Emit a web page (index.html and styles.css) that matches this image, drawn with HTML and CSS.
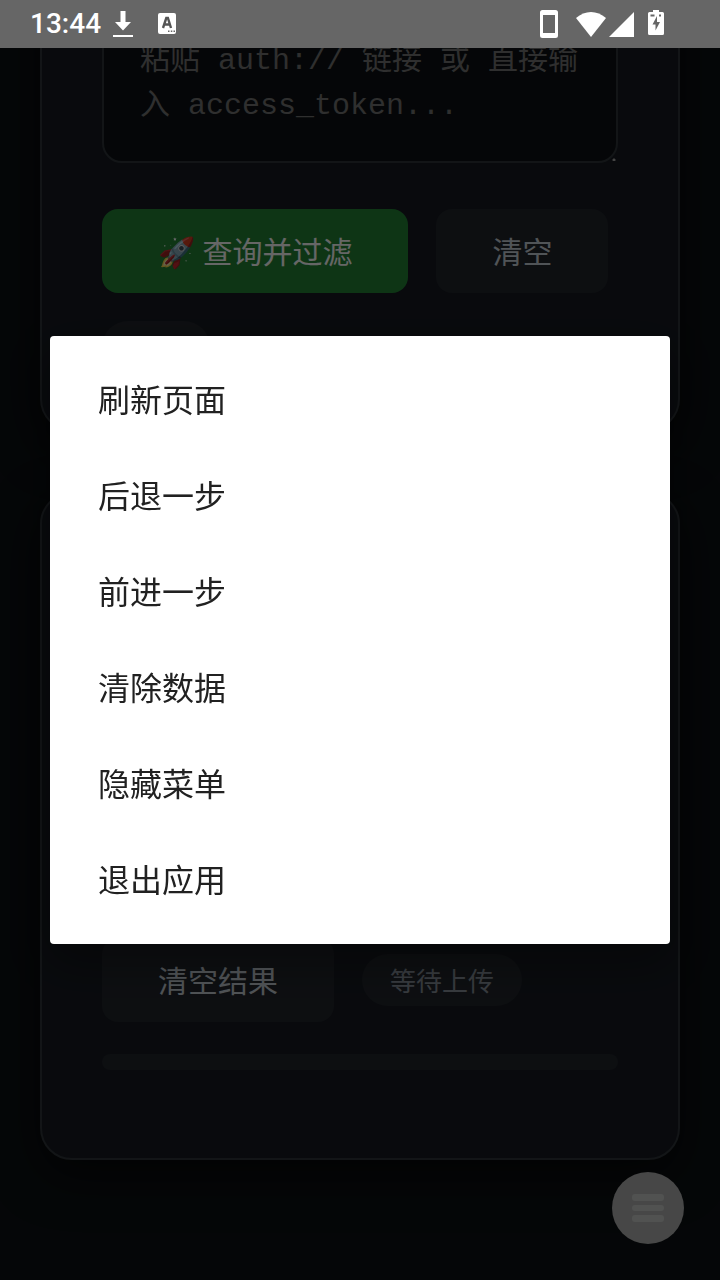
FILE: index.html
```
<!DOCTYPE html>
<html lang="zh-CN">
<head>
  <meta charset="UTF-8"/>
  <meta name="viewport" content="width=device-width, initial-scale=1"/>
  <title>查询并过滤</title>
  <link rel="stylesheet" href="styles.css">
</head>
<body>
  <header class="status-bar">
    <time class="clock">13:44</time>
    <svg class="icon-download" width="20" height="26" viewBox="0 0 20 26" fill="#fff">
      <path d="M7.500 0h5v11h5.500L10 19.500 2 11h5.500zM0 24h20v2H0z"/>
    </svg>
    <svg class="icon-keyboard" width="18" height="22" viewBox="0 0 18 22">
      <rect width="18" height="21" rx="2" fill="#fff"/>
      <path d="M5 15l3.300-10h1.600L13 15M6.300 11.500h5.500" fill="none" stroke="#555" stroke-width="2.400"/>
      <path d="M10 17.500h1.500v1.500h-1.500zM12.800 17.500h1.500v1.500h-1.500zM15.500 17.500h1.500v1.500h-1.500z" fill="#666"/>
    </svg>
    <div class="status-right">
      <svg class="icon-phone" width="18" height="28" viewBox="0 0 18 28">
        <path fill="#fff" fill-rule="evenodd" d="M2.500 0h13A2.500 2.500 0 0 1 18 2.500v23a2.500 2.500 0 0 1-2.500 2.500h-13A2.500 2.500 0 0 1 0 25.500v-23A2.500 2.500 0 0 1 2.500 0zM3 5v18h12V5z"/>
      </svg>
      <svg class="icon-wifi" width="30" height="25" viewBox="0 0 30 25" fill="#fff">
        <path d="M0 6C9-2 21-2 30 6L15 25z"/>
      </svg>
      <svg class="icon-signal" width="25" height="25" viewBox="0 0 25 25" fill="#fff">
        <path d="M25 0v25H0z"/>
      </svg>
      <svg class="icon-battery" width="16" height="25" viewBox="0 0 16 25">
        <path fill="#fff" d="M5 0h6v2h3.500A1.500 1.500 0 0 1 16 3.500v20a1.500 1.500 0 0 1-1.500 1.500h-13A1.500 1.500 0 0 1 0 23.500v-20A1.500 1.500 0 0 1 1.500 2H5z"/>
        <path fill="#666" d="M2.500 4.500h4v2h-4zM11 4.500h2v2h-2zM9 6v6h3L7.500 20.500v-6H4.500z"/>
      </svg>
    </div>
  </header>

  <main class="page">
    <section class="card">
      <textarea class="token-input" rows="2" aria-label="access_token" placeholder="粘贴 auth:// 链接 或 直接输入 access_token..."></textarea>
      <div class="actions">
        <button class="btn btn-primary">🚀 查询并过滤</button>
        <button class="btn">清空</button>
        <span class="chip"></span>
      </div>
    </section>

    <section class="card">
      <div class="results"></div>
      <div class="actions">
        <button class="btn">清空结果</button>
        <span class="chip">等待上传</span>
      </div>
      <progress class="progress" value="0" max="100" aria-label="等待上传"></progress>
    </section>
  </main>

  <button class="fab" aria-label="菜单">
    <svg width="34" height="30" viewBox="0 0 34 30" fill="#cacdca">
      <rect x="1" y="1" width="32" height="7" rx="3"/>
      <rect x="1" y="12" width="32" height="6" rx="3"/>
      <rect x="1" y="22" width="32" height="7" rx="3"/>
    </svg>
  </button>

  <!-- menu dialog -->
  <div class="scrim">
    <div class="menu" role="menu">
      <button class="menu-item" role="menuitem">刷新页面</button>
      <button class="menu-item" role="menuitem">后退一步</button>
      <button class="menu-item" role="menuitem">前进一步</button>
      <button class="menu-item" role="menuitem">清除数据</button>
      <button class="menu-item" role="menuitem">隐藏菜单</button>
      <button class="menu-item" role="menuitem">退出应用</button>
    </div>
  </div>
</body>
</html>
```
FILE: styles.css
```
:root {
  --bg-page: #0d1114;
  --bg-card: #171b22;
  --bg-btn: #22262c;
  --border-color: #30363b;
  --green: #238636;
  --text-primary: #c9d1d9;
  --text-muted: #8b949e;
}

/* RESET */
* { box-sizing:border-box; margin:0; padding:0 }
body {
  display:flex;
  flex-direction:column;
  height:100vh;
  overflow:hidden;
  font-family:Roboto,"Noto Sans CJK SC",sans-serif;
  background: var(--bg-page);
  color: var(--text-primary);
}
button {
  border:none;
  font-family:inherit;
  cursor:pointer;
}

/* STATUS BAR */
.status-bar {
  position:relative;
  z-index:30;
  flex:none;
  display:flex;
  align-items:center;
  height:48px;
  padding:0 56px 0 30px;
  background:#666;
  color:#fff;
}
.clock {
  font-size:28px;
  font-weight:500;
  line-height:32px;
}
.icon-download { margin-left:12px }
.icon-keyboard { margin-left:25px }
.status-right {
  display:flex;
  align-items:center;
  margin-left:auto;
}
.icon-wifi { margin-left:18px }
.icon-signal { margin-left:3px }
.icon-battery { margin:0 0 4px 14px }

/* PAGE, kept scrolled to the bottom */
.page {
  flex:1;
  min-height:0;
  display:flex;
  flex-direction:column;
  justify-content:flex-end;
  gap:61px;
  padding:0 40px 120px;
  overflow:hidden;
}
.card {
  flex:none;
  padding:56px 60px;
  background: var(--bg-card);
  border:2px solid var(--border-color);
  border-radius:32px;
  box-shadow:0 16px 48px rgba(0,0,0,.6);
}
.token-input {
  display:block;
  width:100%;
  margin-bottom:46px;
  padding:40px 36px 32px;
  border:2px solid var(--border-color);
  border-radius:20px;
  background: var(--bg-page);
  color: var(--text-primary);
  font-family:"Liberation Mono","Noto Sans CJK SC",monospace;
  font-size:30px;
  line-height:45px;
  overflow:hidden;
  resize:vertical;
}
.token-input::placeholder { color:#757575 }
.token-input::-webkit-resizer {
  background:radial-gradient(circle at 13px 14px, #aaa 1px, transparent 2px);
}

/* BUTTONS */
.actions {
  display:flex;
  flex-wrap:wrap;
  align-items:center;
  gap:28px;
}
.btn {
  height:84px;
  padding:0 56px 2px;
  border-radius:16px;
  background: var(--bg-btn);
  color: var(--text-primary);
  font-size:30px;
}
.btn-primary {
  background: var(--green);
  color:#fff;
}
.chip {
  min-width:108px;
  height:52px;
  padding:2px 28px 0;
  border-radius:26px;
  background: var(--bg-btn);
  color: var(--text-muted);
  font-size:26px;
  line-height:52px;
}
.results {
  min-height:360px;
  margin-bottom:28px;
}
.progress {
  display:block;
  width:100%;
  height:16px;
  margin:32px 0;
  border:none;
  border-radius:8px;
  overflow:hidden;
  appearance:none;
}
.progress::-webkit-progress-bar { background: var(--bg-btn) }
.progress::-webkit-progress-value { background: var(--green) }

/* FLOATING BUTTON */
.fab {
  position:fixed;
  right:36px;
  bottom:36px;
  display:flex;
  align-items:center;
  justify-content:center;
  width:72px;
  height:72px;
  border-radius:50%;
  background:#b1b1b1;
}

/* MENU */
.scrim {
  position:fixed;
  inset:0;
  z-index:20;
  display:flex;
  align-items:center;
  padding:0 50px;
  background:rgba(0,0,0,.6);
}
.menu {
  flex:1;
  display:flex;
  flex-direction:column;
  padding:16px 0;
  border-radius:4px;
  background:#fff;
  box-shadow:0 16px 48px rgba(0,0,0,.4);
}
.menu-item {
  height:96px;
  padding:0 48px 4px;
  background:none;
  color:#212121;
  font-size:32px;
  text-align:left;
}
```
